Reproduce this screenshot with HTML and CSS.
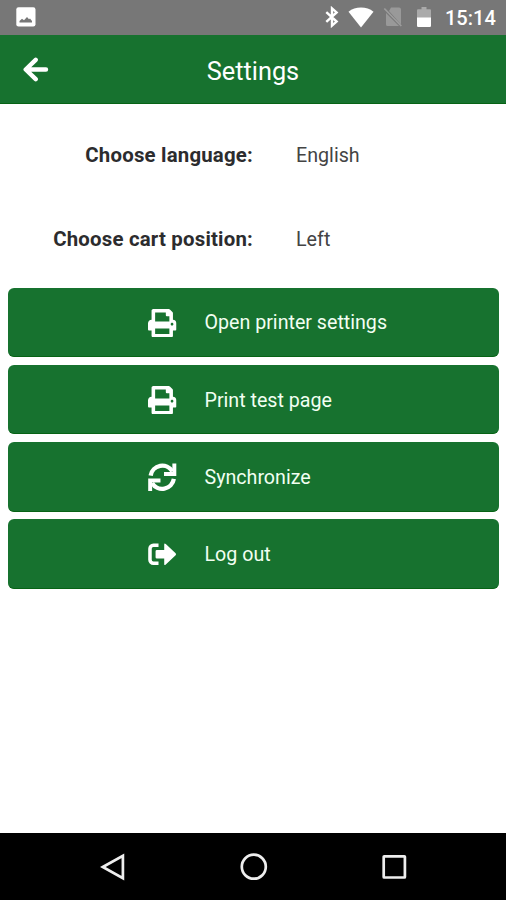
FILE: index.html
```html
<!DOCTYPE html>
<html lang="en">
<head>
<meta charset="utf-8">
<title>Settings</title>
<link rel="stylesheet" href="styles.css">
</head>
<body>
<svg class="defs" aria-hidden="true">
  <symbol id="print" viewBox="0 0 512 512"><path d="M448 192V77.25c0-8.49-3.37-16.62-9.37-22.63L393.37 9.37c-6-6-14.14-9.37-22.63-9.37H96C78.33 0 64 14.33 64 32v160c-35.35 0-64 28.65-64 64v112c0 8.84 7.16 16 16 16h48v96c0 17.67 14.33 32 32 32h320c17.67 0 32-14.33 32-32v-96h48c8.84 0 16-7.16 16-16V256c0-35.35-28.65-64-64-64zm-64 256H128v-96h256v96zm0-224H128V64h192v48c0 8.84 7.16 16 16 16h48v96zm48 72c-13.25 0-24-10.75-24-24 0-13.26 10.75-24 24-24s24 10.74 24 24c0 13.25-10.75 24-24 24z"/></symbol>
</svg>
<div class="screen">
  <div class="status">
    <svg class="photo" width="20" height="20" viewBox="0 0 20 20"><rect x=".3" y=".3" width="19.2" height="19.2" rx="2.2" fill="#fff"/><path d="M3.500 15.500v-1.500l2.500-2.300 2 1.500 3-3.200 2 2.300 1 -.8 2 2.500v1.500z" fill="#777"/></svg>
    <svg class="bluetooth" width="14" height="22" viewBox="0 0 14 22" fill="none" stroke="#fff" stroke-width="2.400"><path d="M1.300 6.200l10.300 9.400-4.600 4V2.400l4.600 4-10.300 9.400"/></svg>
    <svg class="wifi" width="26" height="21" viewBox="0 0 26 21"><path d="M.5 4.700C4 2 8.200.6 13 .6S22 2 25.500 4.700L13 20.400z" fill="#fff"/></svg>
    <svg class="sim" width="20" height="22" viewBox="0 0 20 22"><path d="M8 1.500h8a2 2 0 0 1 2 2v15L6 5zM3 7l13 13H4.500a1.500 1.500 0 0 1-1.500-1.500z" fill="#999"/><path d="M1.300 2.500l17 17.500" stroke="#9d9d9d" stroke-width="1.700"/></svg>
    <svg class="battery" width="14" height="22" viewBox="0 0 14 22"><path d="M4.500 1h5v2.200H13a1 1 0 0 1 1 1V12H0V4.200a1 1 0 0 1 1-1h3.500z" fill="#aaa"/><path d="M0 11.500h14v8.300a1.200 1.200 0 0 1-1.200 1.200H1.200A1.200 1.200 0 0 1 0 19.800z" fill="#fff"/></svg>
    <span class="time">15:14</span>
  </div>
  <header class="header">
    <svg class="back" width="26" height="25" viewBox="0 0 26 25" fill="none" stroke="#fff" stroke-width="4.400" stroke-linecap="round" stroke-linejoin="round"><path d="M12.700 2.800L2.700 12.500l10 9.700M3.500 12.500H23"/></svg>
    <h1 class="title">Settings</h1>
  </header>
  <main class="content">
    <dl class="options">
      <dt>Choose language:</dt><dd>English</dd>
      <dt>Choose cart position:</dt><dd>Left</dd>
    </dl>
    <div class="actions">
      <button class="action"><svg class="icon"><use href="#print"/></svg><span>Open printer settings</span></button>
      <button class="action"><svg class="icon"><use href="#print"/></svg><span>Print test page</span></button>
      <button class="action"><svg class="icon line" viewBox="0 0 29 29"><path d="M2.700 12.800A12 12 0 0 1 24.800 8.600M26.300 16.200A12 12 0 0 1 4.200 20.400" stroke-width="4.400"/><path d="M26.800.600V11.200H16.300M2.200 28.400V17.800H12.700" stroke-width="4"/></svg><span>Synchronize</span></button>
      <button class="action"><svg class="icon" viewBox="0 0 29 29"><path d="M10.700 5.300H5.500a3.500 3.500 0 0 0-3.500 3.500v11.400a3.500 3.500 0 0 0 3.500 3.500H10.700" fill="none" stroke="#fff" stroke-width="3.600"/><path d="M9 10.200h7.500V4.700q0-2 1.600-.7l10 9.400q1 1.100 0 2.200l-10 9.400q-1.600 1.300-1.600-.7v-5.500H9q-1.300 0-1.300-1.300v-6q0-1.300 1.300-1.300z"/></svg><span>Log out</span></button>
    </div>
  </main>
  <nav class="nav">
    <svg width="28" height="30" viewBox="0 0 28 30"><path d="M3.800 15L23.900 3.900v22.200z"/></svg>
    <svg width="28" height="30" viewBox="0 0 28 30"><circle cx="13.800" cy="14.700" r="12"/></svg>
    <svg width="28" height="30" viewBox="0 0 28 30"><rect x="3.700" y="4.300" width="21.200" height="21.200" rx=".5"/></svg>
  </nav>
</div>
</body>
</html>
```
FILE: styles.css
```css
* { box-sizing: border-box; }
body { margin: 0; font-family: Roboto, sans-serif; background: #fff; }
.defs { display: none; }
.screen { width: 506px; height: 900px; display: flex; flex-direction: column; }
.status { height: 34.500px; flex: none; display: flex; align-items: center; padding: 0 10px 0 16px; background: #777; color: #fff; }
.photo { margin-right: auto; }
.bluetooth { margin-right: 9px; }
.wifi { margin-right: 9px; }
.sim { margin-right: 14px; }
.battery { margin-right: 14px; }
.time { width: 51px; font-size: 20px; font-weight: 500; line-height: 34px; white-space: nowrap; padding-top: 2px; }
.header { height: 69.500px; flex: none; display: grid; grid-template-columns: 1fr auto 1fr; align-items: center; background: #17722f; border-bottom: 1.500px solid #076315; color: #fff; }
.back { margin: 2px 0 0 23px; }
.title { margin: 6px 0 0; font-size: 25.300px; font-weight: 400; line-height: 30px; }
.content { flex: 1; padding: 9px 7px 0 8px; }
.options { display: grid; grid-template-columns: 245px 1fr; grid-auto-rows: 84px; column-gap: 43px; align-items: center; margin: 0 0 6.500px; font-size: 19.700px; color: #2c2c2e; }
.options dt { text-align: right; font-size: 20.400px; font-weight: 700; letter-spacing: .2px; }
.options dd { margin: 0; color: #444; }
.actions { display: flex; flex-direction: column; gap: 7.800px; }
.action { display: flex; align-items: center; height: 69.500px; padding: 2px 0 0 140px; border: 0; border-radius: 6px; border-bottom: 1px solid #076315; background: #17722f; color: #f2fff2; font: 400 19.650px Roboto, sans-serif; text-align: left; }
.icon { width: 28.500px; height: 28.500px; margin-right: 28px; fill: #fff; }
.icon.line { fill: none; stroke: #fff; }
.nav { height: 67px; flex: none; display: flex; justify-content: space-between; align-items: center; padding: 0 98px 0 99px; background: #000; }
.nav svg { fill: none; stroke: #eee; stroke-width: 2.700; }
```
